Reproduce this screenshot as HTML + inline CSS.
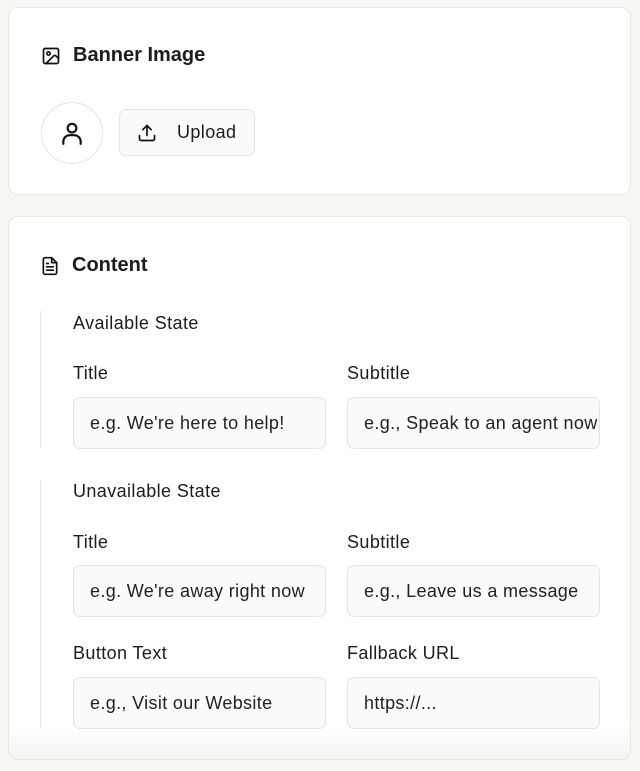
<!DOCTYPE html>
<html><head><style>
*{box-sizing:border-box;margin:0;padding:0}
body{width:640px;height:771px;background:#f7f6f3;font-family:"Liberation Sans",sans-serif;color:#1c1c1c;position:relative;overflow:hidden}
.card{position:absolute;left:8px;width:623px;background:#fff;border:1px solid #e8e6e1;border-radius:10px}
.h{position:absolute;left:32px;font-size:20px;font-weight:bold;display:flex;align-items:center;gap:12px}
.h svg{width:20px;height:20px}
.lbl{position:absolute;font-size:18px;letter-spacing:0.4px;color:#1c1c1c}
.in{position:absolute;width:253px;height:52px;background:#fbfaf8;border:1px solid #e6e4df;border-radius:7px;font-size:18px;letter-spacing:0.35px;padding:0 16px;line-height:50px;white-space:nowrap;overflow:hidden;color:#222}
.vl{position:absolute;left:40px;width:1px;background:#e6e4df}
</style></head><body>
<div class="card" style="top:7px;height:188px">
  <div class="h" style="top:36px"><svg viewBox="0 0 24 24" fill="none" stroke="#111" stroke-width="2" stroke-linecap="round" stroke-linejoin="round"><rect x="3" y="3" width="18" height="18" rx="2"/><circle cx="9" cy="9" r="2"/><path d="M21 15l-3.1-3.1a2 2 0 0 0-2.8 0L6 21"/></svg>Banner Image</div>
  <div style="position:absolute;left:32px;top:94px;width:62px;height:62px;border:1px solid #e6e4df;border-radius:50%;display:flex;align-items:center;justify-content:center"><svg width="26" height="26" viewBox="0 0 24 24" fill="none" stroke="#111" stroke-width="2" stroke-linecap="round"><circle cx="12" cy="7.5" r="4"/><path d="M4 22v-2a6 6 0 0 1 6-6h4a6 6 0 0 1 6 6v2"/></svg></div>
  <div style="position:absolute;left:110px;top:101px;width:136px;height:47px;background:#fbfaf8;border:1px solid #e6e4df;border-radius:7px;display:flex;align-items:center;font-size:18px;letter-spacing:0.4px"><svg style="margin-left:17px" width="20" height="20" viewBox="0 0 24 24" fill="none" stroke="#111" stroke-width="2" stroke-linecap="round" stroke-linejoin="round"><path d="M21 15v4a2 2 0 0 1-2 2H5a2 2 0 0 1-2-2v-4"/><path d="M17 8l-5-5-5 5"/><path d="M12 3v12"/></svg><span style="margin-left:20px">Upload</span></div>
</div>
<div class="card" style="top:216px;height:544px;background:linear-gradient(#fff 0,#fff 510px,#f3f2ef 544px)"></div>
<div class="h" style="top:254px;left:40px"><svg viewBox="0 0 24 24" fill="none" stroke="#111" stroke-width="2" stroke-linecap="round" stroke-linejoin="round"><path d="M14 2H6a2 2 0 0 0-2 2v16a2 2 0 0 0 2 2h12a2 2 0 0 0 2-2V8z"/><path d="M14 2v6h6"/><path d="M16 13H8M16 17H8M10 9H8"/></svg>Content</div>
<div class="vl" style="top:311px;height:137px"></div>
<div class="vl" style="top:480px;height:248px"></div>
<div class="lbl" style="left:73px;top:313px">Available State</div>
<div class="lbl" style="left:73px;top:363px">Title</div>
<div class="lbl" style="left:347px;top:363px">Subtitle</div>
<div class="in" style="left:73px;top:397px">e.g. We're here to help!</div>
<div class="in" style="left:347px;top:397px">e.g., Speak to an agent now</div>
<div class="lbl" style="left:73px;top:481px">Unavailable State</div>
<div class="lbl" style="left:73px;top:532px">Title</div>
<div class="lbl" style="left:347px;top:532px">Subtitle</div>
<div class="in" style="left:73px;top:565px">e.g. We're away right now</div>
<div class="in" style="left:347px;top:565px">e.g., Leave us a message</div>
<div class="lbl" style="left:73px;top:643px">Button Text</div>
<div class="lbl" style="left:347px;top:643px">Fallback URL</div>
<div class="in" style="left:73px;top:677px">e.g., Visit our Website</div>
<div class="in" style="left:347px;top:677px">https://...</div>
</body></html>
